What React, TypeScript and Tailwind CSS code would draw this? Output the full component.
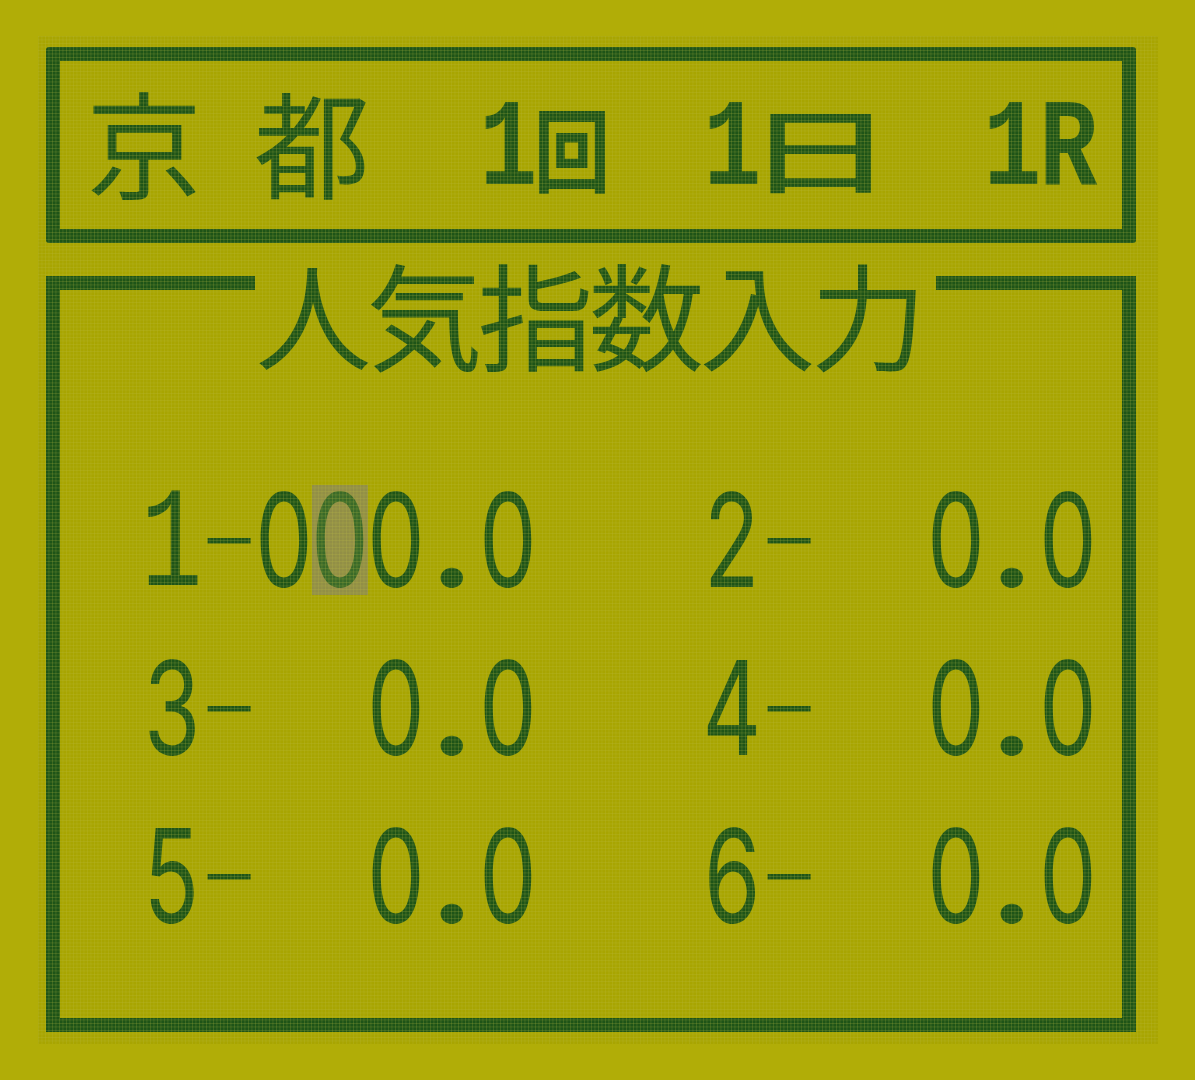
import React from "react";

const MONO = "font-['Liberation_Mono','DejaVu_Sans_Mono',monospace]";
const CJK = "font-['Noto_Sans_CJK_JP','Noto_Sans',sans-serif]";
const INTER = "font-['Inter','Liberation_Sans',sans-serif]";

function Kanji({ ch }: { ch: string }) {
  return (
    <div className="w-[112px] h-[120px] flex items-center justify-center">
      <span className={`${CJK} text-[116px] leading-none -translate-y-[6px]`}>{ch}</span>
    </div>
  );
}

function HeadDigit({ ch }: { ch: string }) {
  return (
    <div className="w-[56px] h-[120px] flex items-center justify-center">
      <span className={`${MONO} font-bold text-[124px] leading-none scale-x-[0.78] translate-y-[6px]`}>{ch}</span>
    </div>
  );
}

function Glyph({ ch }: { ch: string }) {
  if (ch === " ") return <span>{"\u00a0"}</span>;
  if (ch === "1")
    return <span className={`${MONO} text-[142px] leading-none scale-x-[0.72] translate-y-[8px]`}>1</span>;
  if (ch === "-")
    return (
      <span className={`${INTER} font-extralight text-[130px] leading-none scale-x-[1.15] -translate-y-[6px] translate-x-[1px]`}>
        -
      </span>
    );
  if (ch === ".")
    return <span className={`${INTER} font-semibold text-[130px] leading-none scale-x-[1.1]`}>.</span>;
  return <span className={`${INTER} font-normal text-[130px] leading-none scale-x-[0.7]`}>{ch}</span>;
}

function Digit({ ch, hi = false }: { ch: string; hi?: boolean }) {
  return (
    <div
      className={`w-[56px] h-[110px] flex items-center justify-center ${
        hi ? "bg-[#928f46] text-[#3a6a28]" : ""
      }`}
    >
      <Glyph ch={ch} />
    </div>
  );
}

function Group({ text, hiIndex = -1 }: { text: string; hiIndex?: number }) {
  return (
    <div className="flex">
      {text.split("").map((c, i) => (
        <Digit key={i} ch={c} hi={i === hiIndex} />
      ))}
    </div>
  );
}

export default function App() {
  const rows: [string, string, number][] = [
    ["1-000.0", "2-  0.0", 3],
    ["3-  0.0", "4-  0.0", -1],
    ["5-  0.0", "6-  0.0", -1],
  ];
  return (
    <div className="w-[1195px] h-[1080px] bg-[#b1ad07] pt-[36px] pl-[38px] overflow-hidden">
      <div className="relative w-[1120px] h-[1008px] bg-[#a8a501] text-[#1e5417] pt-[11px]">
        {/* header box */}
        <div className="ml-[8px] w-[1090px] h-[196px] border-[14px] border-[#1e5417] rounded-[3px] flex items-center pl-[28px]">
          <Kanji ch="京" />
          <div className="w-[56px]" />
          <Kanji ch="都" />
          <div className="w-[112px]" />
          <HeadDigit ch="1" />
          <div className="w-[72px] h-[120px] flex items-center justify-center">
            <span className={`${CJK} font-bold text-[90px] leading-none scale-x-[0.85] translate-y-[1px]`}>回</span>
          </div>
          <div className="w-[96px]" />
          <HeadDigit ch="1" />
          <div className="w-[112px] h-[120px] flex items-center justify-center">
            <span className={`${CJK} font-medium text-[92px] leading-none scale-x-[1.62] translate-x-[4px] translate-y-[1px]`}>日</span>
          </div>
          <div className="w-[112px]" />
          <HeadDigit ch="1" />
          <HeadDigit ch="R" />
        </div>

        {/* input box */}
        <div className="mt-[33px] ml-[8px] w-[1090px] h-[756px] border-x-[14px] border-b-[14px] border-[#1e5417] flex flex-col">
          <div className="flex items-start">
            <div className="w-[195px] h-[14px] bg-[#1e5417]" />
            <div className="ml-[3px] -mt-[25px] flex">
              {"人気指数入力".split("").map((c, i) => (
                <div key={i} className="w-[111px] h-[120px] flex items-center justify-center">
                  <span className={`${CJK} text-[116px] leading-none`}>{c}</span>
                </div>
              ))}
            </div>
            <div className="ml-[12px] flex-1 h-[14px] bg-[#1e5417]" />
          </div>

          <div className="mt-[114px] pl-[84px] flex flex-col gap-[58px]">
            {rows.map(([a, b, hi], i) => (
              <div key={i} className="flex">
                <Group text={a} hiIndex={hi} />
                <div className="w-[168px]" />
                <Group text={b} />
              </div>
            ))}
          </div>
        </div>

        {/* dot-matrix overlay */}
        <div className="pointer-events-none absolute inset-0 bg-[image:linear-gradient(to_right,rgba(190,190,70,0.22)_1px,transparent_1px),linear-gradient(to_bottom,rgba(190,190,70,0.22)_1px,transparent_1px)] bg-[size:3.5px_3.5px]" />
      </div>
    </div>
  );
}
